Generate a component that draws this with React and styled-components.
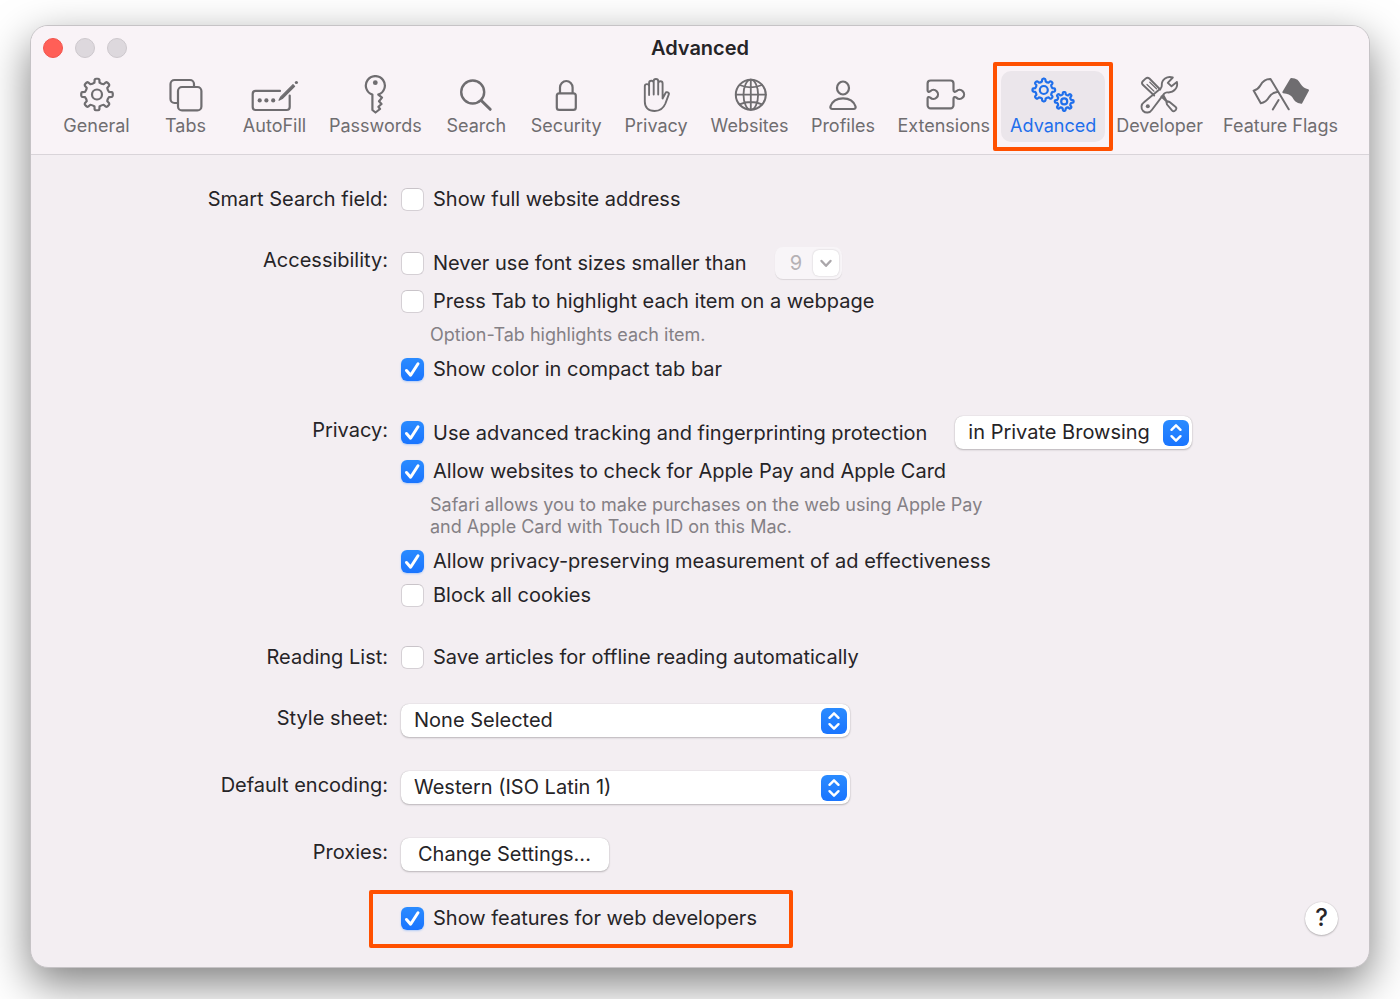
import React, { useState } from 'react';
import styled, { createGlobalStyle, css } from 'styled-components';

const colors = {
  text: '#262427',
  muted: '#848085',
  icon: '#6f6d70',
  accent: '#1f6feb',
  highlight: '#ff5000',
  toolbar: '#f9f3f7',
  content: '#f3eef2',
  line: '#d9d4d9',
};

const GlobalStyle = createGlobalStyle`
  * {
    box-sizing: border-box;
  }
  body {
    margin: 0;
    background: #fff;
    color: ${colors.text};
    font-family: Inter, "Liberation Sans", sans-serif;
    font-size: 20px;
    line-height: 24px;
  }
  button, input, select {
    font: inherit;
    color: inherit;
    margin: 0;
  }
`;

const Page = styled.div`
  display: flex;
  min-height: 100vh;
  padding: 25px 30px 31px;
`;

const Window = styled.main`
  flex: 1;
  display: flex;
  flex-direction: column;
  border: 1px solid #c6c3c6;
  border-radius: 18px;
  background: ${colors.content};
  box-shadow: 0 16px 44px rgba(0, 0, 0, 0.5);
`;

const Header = styled.header`
  background: ${colors.toolbar};
  border-bottom: 1px solid ${colors.line};
  border-radius: 17px 17px 0 0;
  padding-bottom: 12px;
`;

const TitleBar = styled.div`
  display: grid;
  grid-template-columns: 1fr auto 1fr;
  align-items: center;
  height: 43px;
  padding: 0 12px;
`;

const Title = styled.h1`
  margin: 0;
  font-size: 20px;
  font-weight: 600;
  line-height: 24px;
`;

const Lights = styled.div`
  display: flex;
  gap: 12px;
`;

const Light = styled.button`
  width: 20px;
  height: 20px;
  padding: 0;
  border-radius: 50%;
  border: 1px solid ${({ $close }) => ($close ? '#f2544d' : '#cdc8cd')};
  background: ${({ $close }) => ($close ? '#ff5f57' : '#ddd8dd')};
`;

const Toolbar = styled.nav`
  display: flex;
  gap: 2px;
  padding: 2px 0 0 22px;
`;

const ToolButton = styled.button`
  position: relative;
  display: flex;
  flex-direction: column;
  align-items: center;
  min-width: 87px;
  padding: 4px 9px 5px;
  border: 0;
  border-radius: 10px;
  background: transparent;
  color: ${colors.icon};
  font-size: 18px;
  line-height: 22px;
  white-space: nowrap;
  ${({ $active }) =>
    $active &&
    css`
      background: #ebe6eb;
      color: ${colors.accent};
    `}
`;

const Icon = styled.svg`
  width: 60px;
  height: 40px;
  fill: none;
  stroke: currentColor;
  stroke-width: 2.2;
  stroke-linecap: round;
  stroke-linejoin: round;
`;

const Highlight = styled.span`
  position: absolute;
  inset: ${({ $inset }) => $inset};
  border: 4px solid ${colors.highlight};
  border-radius: 2px;
  pointer-events: none;
`;

const Form = styled.form`
  padding: 32px 31px 36px 0;
`;

const Group = styled.div`
  display: grid;
  grid-template-columns: 357px 1fr;
  column-gap: 13px;
  margin-top: ${({ $space }) => $space || 0}px;
`;

const GroupLabel = styled.label`
  padding-top: ${({ $drop }) => $drop || 0}px;
  text-align: right;
`;

const Controls = styled.div`
  display: flex;
  flex-direction: column;
  align-items: flex-start;
  gap: 10px;
`;

const Row = styled.div`
  position: relative;
  display: flex;
  align-items: center;
  gap: 28px;
`;

const CheckLabel = styled.label`
  display: flex;
  align-items: center;
  gap: 9px;
`;

const CheckBox = styled.span`
  display: grid;
  width: 23px;
  height: 23px;

  > * {
    grid-area: 1 / 1;
  }
`;

const CheckInput = styled.input`
  appearance: none;
  width: 23px;
  height: 23px;
  border: 1px solid #d5d0d5;
  border-top-color: #c9c4c9;
  border-radius: 6px;
  background: #fff;

  &:checked {
    border: 0;
    background: linear-gradient(#2a8bff, #1a75ff);
    box-shadow: 0 1px 2px rgba(31, 127, 255, 0.3);
  }
`;

const CheckMark = styled.svg`
  width: 23px;
  height: 23px;
  fill: none;
  stroke: #fff;
  stroke-width: 3;
  stroke-linecap: round;
  stroke-linejoin: round;
  pointer-events: none;
`;

const Hint = styled.p`
  margin: 1px 0 1px 29px;
  max-width: 570px;
  color: ${colors.muted};
  font-size: 18px;
  line-height: 22px;
`;

const SelectBox = styled.span`
  display: inline-grid;
  align-items: center;
  width: ${({ $width }) => $width}px;

  > * {
    grid-area: 1 / 1;
  }
`;

const raised = css`
  border: 0;
  border-radius: 8px;
  background: #fff;
  box-shadow: 0 0 1px rgba(0, 0, 0, 0.25), 0 1px 2px rgba(0, 0, 0, 0.22);
`;

const SelectInput = styled.select`
  ${raised}
  appearance: none;
  width: 100%;
  height: 33px;
  padding: 0 40px 2px 13px;

  &:disabled {
    height: 32px;
    padding: 0 30px 0 15px;
    background: #f8f5f8;
    color: #b5b1b5;
    opacity: 1;
    box-shadow: 0 1px 1px rgba(0, 0, 0, 0.1);
  }
`;

const Badge = styled.svg`
  justify-self: end;
  margin-right: 3px;
  width: 26px;
  height: 26px;
  border-radius: 6px;
  background: ${({ $muted }) => ($muted ? '#fff' : 'linear-gradient(#2a8bff, #1a75ff)')};
  box-shadow: ${({ $muted }) => ($muted ? '0 0 2px rgba(0, 0, 0, 0.2)' : 'none')};
  fill: none;
  stroke: ${({ $muted }) => ($muted ? '#aaa6aa' : '#fff')};
  stroke-width: 2.4;
  stroke-linecap: round;
  stroke-linejoin: round;
  pointer-events: none;
`;

const PushButton = styled.button`
  ${raised}
  height: 33px;
  padding: 0 18px 2px 17px;
`;

const Footer = styled.div`
  display: flex;
  align-items: center;
  justify-content: space-between;
  height: 24px;
`;

const HelpButton = styled.button`
  ${raised}
  width: 33px;
  height: 33px;
  padding: 0;
  border-radius: 50%;
  font-size: 24px;
  font-weight: 500;
  line-height: 32px;
`;

const gearPath = (cx, cy, outer, inner, teeth = 8) => {
  const step = (Math.PI * 2) / teeth;
  const at = (r, a) =>
    `${(cx + r * Math.sin(a)).toFixed(2)} ${(cy - r * Math.cos(a)).toFixed(2)}`;
  let d = '';
  for (let i = 0; i < teeth; i++) {
    const a = i * step;
    d += `${i ? 'L' : 'M'}${at(inner, a - step * 0.27)}`;
    d += `L${at(outer - 0.8, a - step * 0.2)}Q${at(outer, a - step * 0.17)} ${at(outer, a - step * 0.08)}`;
    d += `L${at(outer, a + step * 0.08)}Q${at(outer, a + step * 0.17)} ${at(outer - 0.8, a + step * 0.2)}`;
    d += `L${at(inner, a + step * 0.27)}`;
    d += `Q${at(inner - 0.8, a + step * 0.5)} ${at(inner, a + step * 0.73)}`;
  }
  return `${d}Z`;
};

const icons = {
  General: (
    <>
      <path d={gearPath(30, 19.5, 15.8, 12.2)} />
      <circle cx="30" cy="19.5" r="5" />
    </>
  ),
  Tabs: (
    <>
      <rect x="22" y="12" width="23.4" height="23.4" rx="4" />
      <path d="M21.5 28H18.5a4 4 0 0 1-4-4V9a4 4 0 0 1 4-4H34a4 4 0 0 1 4 4V11.5" />
    </>
  ),
  AutoFill: (
    <>
      <path d="M35 15.9H10.7a3 3 0 0 0-3 3V32a3 3 0 0 0 3 3H41.7a3 3 0 0 0 3-3V20.5" />
      <path
        d="M34 25.2L35.8 21.9L48 9.7L49.6 11.3L37.3 23.5Z"
        fill="currentColor"
        strokeWidth="1.2"
      />
      <circle cx="51.4" cy="7.5" r="1.6" fill="currentColor" stroke="none" />
      <g fill="currentColor" stroke="none">
        <circle cx="14.7" cy="25.4" r="2.1" />
        <circle cx="21.4" cy="25.4" r="2.1" />
        <circle cx="28.2" cy="25.4" r="2.1" />
      </g>
    </>
  ),
  Passwords: (
    <>
      <path d="M27.4 19.6A9.5 9.5 0 1 1 33.3 19.6L37 22.6L34 26.2L36.5 29L33.4 31.8L35 34L30.5 37.5L27.4 35Z" />
      <circle cx="30.3" cy="7.7" r="2.4" fill="currentColor" stroke="none" />
    </>
  ),
  Search: (
    <>
      <circle cx="26.7" cy="17" r="11.5" strokeWidth="2.4" />
      <path d="M35.2 25.5L44.2 34.3" strokeWidth="3" />
    </>
  ),
  Security: (
    <>
      <rect x="20.8" y="18.4" width="19" height="16.4" rx="2.4" />
      <path d="M24 18V12.5a6.3 6.5 0 0 1 12.6 0V18" />
    </>
  ),
  Privacy: (
    <path
      strokeWidth="1.9"
      d="M23.1 20V11.3a2.15 2.15 0 0 0-4.3 0V26.5C18.8 32.5 22.5 36 28.7 36C34 36 37.3 33.6 39.4 28.5L42.7 19.7A1.8 1.8 0 0 0 39.4 18.2L36.6 23.5V8.5a2.2 2.2 0 0 0-4.4 0V19.5V6.2a2.25 2.25 0 0 0-4.5 0V19.5V8a2.3 2.3 0 0 0-4.6 0V12"
    />
  ),
  Websites: (
    <g strokeWidth="1.8">
      <circle cx="30.8" cy="19.7" r="15" strokeWidth="2" />
      <ellipse cx="30.8" cy="19.7" rx="7.3" ry="15" />
      <path d="M30.8 4.7V34.7M15.8 19.7H45.8M19.6 10Q30.8 14.8 42 10M19.6 29.4Q30.8 24.6 42 29.4" />
    </g>
  ),
  Profiles: (
    <>
      <ellipse cx="30" cy="13" rx="6" ry="6.5" />
      <path d="M19.4 34H40.6C42.3 34 43 32.8 42.5 31.3C40.8 26.4 36 23.3 30 23.3S19.2 26.4 17.5 31.3C17 32.8 17.7 34 19.4 34Z" />
    </>
  ),
  Extensions: (
    <path d="M13.6 15.6V8.5a3 3 0 0 1 3-3H36.5a3 3 0 0 1 3 3V15c0 1.8 1.5 2.3 2.9 1.2a4.5 4.5 0 1 1 0 6.4c-1.4-1.1-2.9-.6-2.9 1.2V30.3a3 3 0 0 1-3 3H16.6a3 3 0 0 1-3-3V23.3c0-1.5 1.4-1.7 2.7-.7a4.5 4.5 0 1 0 0-6.4c-1.3 1-2.7.8-2.7-.6Z" />
  ),
  Advanced: (
    <>
      <path d={gearPath(20.8, 15, 11.3, 8.8)} />
      <circle cx="20.8" cy="15" r="4" />
      <path d={gearPath(41.2, 26.4, 9.4, 7.2)} />
      <circle cx="41.2" cy="26.4" r="3" />
    </>
  ),
  Developer: (
    <g strokeWidth="1.9">
      <path d="M24.2 20.5L12.8 9.8Q11.2 8 12.8 6.2L15.8 3.4Q17.6 1.9 19.4 3.5L30.2 14.5" />
      <path d="M17 9.5L24 16.2M19.8 7.2L26.5 13.8" strokeWidth="1.2" />
      <path d="M31.5 21.5L36.2 26.2L37 29.5L42.2 35.6Q43.5 37 45 35.6L46 34.6Q47 33.2 45.7 32L39.6 27L36.5 26L33.5 20.5" />
      <path d="M42.8 2.5C37 .7 31.5 4.5 31.8 10.2Q31.9 12.2 30.6 13.6L14 27.3A5.6 5.6 0 1 0 21.8 35L34.2 18.6Q35.5 17.2 37.5 17.4C44 18 48.3 12.5 46.9 7L41.5 11.2L37.8 7.9L42.8 2.5Z" />
      <circle cx="17.8" cy="31.3" r="2" fill="currentColor" stroke="none" />
    </g>
  ),
  'Feature Flags': (
    <g strokeWidth="2">
      <path d="M37.7 34.3L19.5 4C14 3.8 11.5 6.5 9.3 10.5C7.7 13.5 5.5 14.8 2.6 15.6L9.8 28.2C14.5 27.8 16.5 25 18.5 21.6C20.3 18.8 22.8 17.5 26.8 16.8" />
      <path d="M27.6 25L21.8 34.5" />
      <path
        fill="currentColor"
        d="M40.2 4C45.5 4 47 6.5 49 9.8C51 13 53.5 14.5 57 15.2L50.3 27.7C45.5 27.5 44 25 42 21.5C40 18.6 36.8 17.6 32.3 17.2Z"
      />
    </g>
  ),
};

const tools = Object.keys(icons);

const Check = ({ children, defaultChecked = false, id }) => {
  const [checked, setChecked] = useState(defaultChecked);

  return (
    <CheckLabel>
      <CheckBox>
        <CheckInput
          id={id}
          type="checkbox"
          checked={checked}
          onChange={(e) => setChecked(e.target.checked)}
        />
        {checked && (
          <CheckMark viewBox="0 0 23 23" aria-hidden="true">
            <path d="M5.5 12.5L9.6 17.2L17 5.8" />
          </CheckMark>
        )}
      </CheckBox>
      {children}
    </CheckLabel>
  );
};

const Select = ({ options, width, ...rest }) => (
  <SelectBox $width={width}>
    <SelectInput {...rest}>
      {options.map((option) => (
        <option key={option}>{option}</option>
      ))}
    </SelectInput>
    <Badge $muted={rest.disabled} viewBox="0 0 26 26" aria-hidden="true">
      {rest.disabled ? (
        <path d="M8.5 11L13 15.8L17.5 11" />
      ) : (
        <path d="M8.5 9.8L13 5.3L17.5 9.8M8.5 16.2L13 20.7L17.5 16.2" />
      )}
    </Badge>
  </SelectBox>
);

const App = () => {
  const [active, setActive] = useState('Advanced');

  return (
    <>
      <GlobalStyle />
      <Page>
        <Window>
          <Header>
            <TitleBar>
              <Lights>
                <Light type="button" $close aria-label="Close" />
                <Light type="button" aria-label="Minimize" />
                <Light type="button" aria-label="Zoom" />
              </Lights>
              <Title>{active}</Title>
            </TitleBar>
            <Toolbar>
              {tools.map((name) => (
                <ToolButton
                  key={name}
                  type="button"
                  $active={name === active}
                  onClick={() => setActive(name)}
                >
                  <Icon viewBox="0 0 60 40" aria-hidden="true">
                    {icons[name]}
                  </Icon>
                  {name}
                  {name === 'Advanced' && <Highlight $inset="-9px -8px" />}
                </ToolButton>
              ))}
            </Toolbar>
          </Header>

          <Form onSubmit={(e) => e.preventDefault()}>
            <Group>
              <GroupLabel htmlFor="full-address">Smart Search field:</GroupLabel>
              <Controls>
                <Check id="full-address">Show full website address</Check>
              </Controls>
            </Group>

            <Group $space={36}>
              <GroupLabel htmlFor="min-font" $drop={1}>Accessibility:</GroupLabel>
              <Controls>
                <Row>
                  <Check id="min-font">Never use font sizes smaller than</Check>
                  <Select options={['9']} width={67} disabled aria-label="Minimum font size" />
                </Row>
                <Check>Press Tab to highlight each item on a webpage</Check>
                <Hint>Option-Tab highlights each item.</Hint>
                <Check defaultChecked>Show color in compact tab bar</Check>
              </Controls>
            </Group>

            <Group $space={35}>
              <GroupLabel htmlFor="tracking" $drop={2}>Privacy:</GroupLabel>
              <Controls>
                <Row>
                  <Check id="tracking" defaultChecked>
                    Use advanced tracking and fingerprinting protection
                  </Check>
                  <Select
                    options={['in Private Browsing', 'in all browsing']}
                    width={237}
                    aria-label="Use protection"
                  />
                </Row>
                <Check defaultChecked>Allow websites to check for Apple Pay and Apple Card</Check>
                <Hint>
                  Safari allows you to make purchases on the web using Apple Pay
                  and Apple Card with Touch ID on this Mac.
                </Hint>
                <Check defaultChecked>
                  Allow privacy-preserving measurement of ad effectiveness
                </Check>
                <Check>Block all cookies</Check>
              </Controls>
            </Group>

            <Group $space={38}>
              <GroupLabel htmlFor="reading-list">Reading List:</GroupLabel>
              <Controls>
                <Check id="reading-list">Save articles for offline reading automatically</Check>
              </Controls>
            </Group>

            <Group $space={35}>
              <GroupLabel htmlFor="style-sheet" $drop={2}>Style sheet:</GroupLabel>
              <Controls>
                <Select id="style-sheet" options={['None Selected']} width={449} />
              </Controls>
            </Group>

            <Group $space={34}>
              <GroupLabel htmlFor="encoding" $drop={2}>Default encoding:</GroupLabel>
              <Controls>
                <Select id="encoding" options={['Western (ISO Latin 1)']} width={449} />
              </Controls>
            </Group>

            <Group $space={34}>
              <GroupLabel htmlFor="proxies" $drop={2}>Proxies:</GroupLabel>
              <Controls>
                <PushButton id="proxies" type="button">Change Settings...</PushButton>
              </Controls>
            </Group>

            <Group $space={35}>
              <span />
              <Footer>
                <Row>
                  <Check defaultChecked>Show features for web developers</Check>
                  <Highlight $inset="-16px -36px -18px -32px" />
                </Row>
                <HelpButton type="button" aria-label="Help">?</HelpButton>
              </Footer>
            </Group>
          </Form>
        </Window>
      </Page>
    </>
  );
};

export default App;
